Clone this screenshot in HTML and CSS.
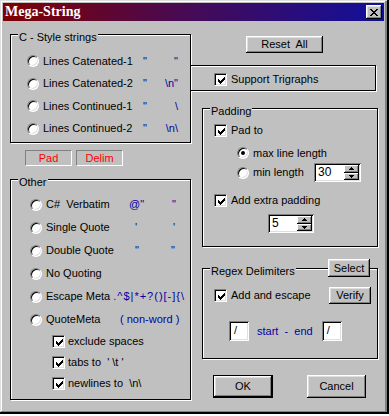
FILE: index.html
```html
<!DOCTYPE html>
<html>
<head>
<meta charset="utf-8">
<title>Mega-String</title>
<link rel="stylesheet" href="styles.css">
</head>
<body>
<div class="window">
  <div class="titlebar">
    <span class="title">Mega-String</span>
    <span class="close"><svg width="8" height="7" viewBox="0 0 8 7"><path d="M0 0h2v1h-2zM6 0h2v1h-2zM1 1h2v1h-2zM5 1h2v1h-2zM2 2h4v1h-4zM3 3h2v1h-2zM2 4h4v1h-4zM1 5h2v1h-2zM5 5h2v1h-2zM0 6h2v1h-2zM6 6h2v1h-2z" fill="#000"/></svg></span>
  </div>
  <div class="client">
    <div class="left">
      <div class="group cstyle">
        <span class="legend">C - Style strings</span>
        <div class="opt"><i class="radio"></i><span class="lbl">Lines Catenated-1</span><span class="q"><b>"</b><b>"</b></span></div>
        <div class="opt"><i class="radio"></i><span class="lbl">Lines Catenated-2</span><span class="q"><b>"</b><b>\n"</b></span></div>
        <div class="opt"><i class="radio"></i><span class="lbl">Lines Continued-1</span><span class="q"><b>"</b><b>\</b></span></div>
        <div class="opt"><i class="radio"></i><span class="lbl">Lines Continued-2</span><span class="q"><b>"</b><b>\n\</b></span></div>
      </div>
      <div class="tags"><span class="tag">Pad</span><span class="tag">Delim</span></div>
      <div class="group other">
        <span class="legend">Other</span>
        <div class="opt"><i class="radio"></i><span class="lbl">C#&nbsp; Verbatim</span><span class="q"><b>@"</b><b>"</b></span></div>
        <div class="opt"><i class="radio"></i><span class="lbl">Single Quote</span><span class="q q-in"><b>'</b><b>'</b></span></div>
        <div class="opt"><i class="radio"></i><span class="lbl">Double Quote</span><span class="q q-in"><b>"</b><b>"</b></span></div>
        <div class="opt"><i class="radio"></i><span class="lbl">No Quoting</span></div>
        <div class="opt"><i class="radio"></i><span class="lbl-auto">Escape Meta</span><span class="meta">.^$|*+?()[-]{\</span></div>
        <div class="opt"><i class="radio"></i><span class="lbl lbl-qm">QuoteMeta</span><span class="blue">( non-word )</span></div>
        <div class="chk-row"><i class="check"><svg width="7" height="7" viewBox="0 0 7 7"><path d="M0 2h1v3h-1zM1 3h1v3h-1zM2 4h1v3h-1zM3 3h1v3h-1zM4 2h1v3h-1zM5 1h1v3h-1zM6 0h1v3h-1z" fill="#000"/></svg></i><span>exclude spaces</span></div>
        <div class="chk-row"><i class="check"><svg width="7" height="7" viewBox="0 0 7 7"><path d="M0 2h1v3h-1zM1 3h1v3h-1zM2 4h1v3h-1zM3 3h1v3h-1zM4 2h1v3h-1zM5 1h1v3h-1zM6 0h1v3h-1z" fill="#000"/></svg></i><span>tabs to&nbsp; ' \t '</span></div>
        <div class="chk-row"><i class="check"><svg width="7" height="7" viewBox="0 0 7 7"><path d="M0 2h1v3h-1zM1 3h1v3h-1zM2 4h1v3h-1zM3 3h1v3h-1zM4 2h1v3h-1zM5 1h1v3h-1zM6 0h1v3h-1z" fill="#000"/></svg></i><span>newlines to&nbsp; \n\</span></div>
      </div>
    </div>

    <div class="right">
      <div class="btn reset">Reset&nbsp; All</div>
      <div class="trig">
        <div class="row-c"><i class="check"><svg width="7" height="7" viewBox="0 0 7 7"><path d="M0 2h1v3h-1zM1 3h1v3h-1zM2 4h1v3h-1zM3 3h1v3h-1zM4 2h1v3h-1zM5 1h1v3h-1zM6 0h1v3h-1z" fill="#000"/></svg></i><span>Support Trigraphs</span></div>
      </div>
      <div class="group padding">
        <span class="legend">Padding</span>
        <div class="row-c r-padto"><i class="check"><svg width="7" height="7" viewBox="0 0 7 7"><path d="M0 2h1v3h-1zM1 3h1v3h-1zM2 4h1v3h-1zM3 3h1v3h-1zM4 2h1v3h-1zM5 1h1v3h-1zM6 0h1v3h-1z" fill="#000"/></svg></i><span>Pad to</span></div>
        <div class="row-r r-max"><i class="radio on"></i><span>max line length</span></div>
        <div class="row-r r-min"><i class="radio"></i><span>min length</span>
          <div class="spin spin30"><span class="spin-text">30</span><span class="spin-btns"><span class="sb"><svg width="5" height="3" viewBox="0 0 5 3"><path d="M2 0h1v1h-1zM1 1h3v1h-3zM0 2h5v1h-5z" fill="#000"/></svg></span><span class="sb"><svg width="5" height="3" viewBox="0 0 5 3"><path d="M0 0h5v1h-5zM1 1h3v1h-3zM2 2h1v1h-1z" fill="#000"/></svg></span></span></div>
        </div>
        <div class="row-c r-extra"><i class="check"><svg width="7" height="7" viewBox="0 0 7 7"><path d="M0 2h1v3h-1zM1 3h1v3h-1zM2 4h1v3h-1zM3 3h1v3h-1zM4 2h1v3h-1zM5 1h1v3h-1zM6 0h1v3h-1z" fill="#000"/></svg></i><span>Add extra padding</span></div>
        <div class="spin spin5"><span class="spin-text">5</span><span class="spin-btns"><span class="sb"><svg width="5" height="3" viewBox="0 0 5 3"><path d="M2 0h1v1h-1zM1 1h3v1h-3zM0 2h5v1h-5z" fill="#000"/></svg></span><span class="sb"><svg width="5" height="3" viewBox="0 0 5 3"><path d="M0 0h5v1h-5zM1 1h3v1h-3zM2 2h1v1h-1z" fill="#000"/></svg></span></span></div>
      </div>
      <div class="group regex">
        <span class="legend">Regex Delimiters</span>
        <div class="btn select">Select</div>
        <div class="row-c r-add"><i class="check"><svg width="7" height="7" viewBox="0 0 7 7"><path d="M0 2h1v3h-1zM1 3h1v3h-1zM2 4h1v3h-1zM3 3h1v3h-1zM4 2h1v3h-1zM5 1h1v3h-1zM6 0h1v3h-1z" fill="#000"/></svg></i><span>Add and escape</span><div class="btn verify">Verify</div></div>
        <div class="delims"><span class="field">/</span><span class="blue se">start&nbsp; -&nbsp; end</span><span class="field">/</span></div>
      </div>
      <div class="actions"><div class="btn ok"><span>OK</span></div><div class="btn cancel">Cancel</div></div>
    </div>
  </div>
</div>
</body>
</html>
```

FILE: styles.css
```css
* { box-sizing: border-box; }
html, body { margin: 0; padding: 0; background: #fff; }
body { font-family: "Liberation Sans", Arial, sans-serif; font-size: 11px; line-height: 13px; color: #000; }
i, b { font-style: normal; font-weight: normal; }

.window {
  width: 389px; height: 414px; background: #c0c0c0; padding: 3px 5px 3px 3px;
  box-shadow: inset -2px -2px #000, inset 1px 1px #dfdfdf, inset -4px -3px #808080, inset 2px 2px #fff;
}
.titlebar {
  height: 18px; display: flex; align-items: center; justify-content: space-between;
  padding: 0 2px 0 2px;
  background: linear-gradient(to right, #800000, #4a0a50 45%, #10109c);
}
.title { font-family: "Liberation Serif", "Times New Roman", serif; font-weight: bold; font-size: 14px; color: #fff; line-height: 16px; }
.close {
  width: 16px; height: 14px; background: #c0c0c0; display: flex; align-items: center; justify-content: center;
  box-shadow: inset -1px -1px #000, inset 1px 1px #fff, inset -2px -2px #808080, inset 2px 2px #dfdfdf;
}
.close svg { display: block; margin-left: -1px; }

.client { display: grid; grid-template-columns: 7px 180px 1px 1fr; align-items: start; }
.left { grid-column: 2 / 4; grid-row: 1; display: flex; flex-direction: column; }
.right { grid-column: 3 / 5; grid-row: 1; z-index: 1; display: flex; flex-direction: column; align-items: flex-start; }

/* etched group box */
.group, .trig {
  position: relative; border: 1px solid #000;
  box-shadow: inset 1px 1px #fff, 1px 1px #fff;
}
.legend { position: absolute; top: -4px; left: 7px; padding: 0 1px; background: #c0c0c0; white-space: nowrap; }

.cstyle { margin-top: 13px; height: 109px; padding: 15px 0 0 16px; }
.opt { display: flex; align-items: center; height: 22.5px; white-space: nowrap; }
.opt .radio { margin-right: 4px; }
.cstyle .lbl { width: 100px; }
.q { display: flex; justify-content: space-between; color: #0000a0; width: 35px; }

.tags { display: flex; gap: 4px; margin: 7px 0 0 15px; }
.tag { width: 47px; height: 16px; border: 1px solid; border-color: #808080 #fff #fff #808080; color: #f00; display: flex; align-items: center; justify-content: center; }

.other { margin-top: 13px; height: 221px; padding: 13px 0 0 19px; }
.other .opt { height: 23px; }
.other .lbl { width: 83px; }
.other .q { width: 47px; }
.other .q-in { padding-left: 6px; width: 46px; }
.other .lbl-qm { width: 74px; }
.meta { color: #0000a0; margin-left: 3px; letter-spacing: 1px; }
.blue { color: #0000a0; }
.chk-row { display: flex; align-items: center; height: 21px; margin-left: 22px; white-space: nowrap; }
.chk-row .check { margin-right: 3px; }

/* controls */
.radio {
  display: block; flex: none; position: relative; width: 12px; height: 12px; border-radius: 50%; background: #fff;
  border: 1px solid; border-color: #808080 #fff #fff #808080;
  box-shadow: inset 1px 1px #000, inset -1px -1px #dfdfdf;
}
.radio.on::after { content: ""; position: absolute; left: 3px; top: 3px; width: 4px; height: 4px; border-radius: 50%; background: #000; }
.check {
  display: block; flex: none; width: 13px; height: 13px; background: #fff; padding: 2px;
  border: 1px solid; border-color: #808080 #fff #fff #808080;
  box-shadow: inset 1px 1px #000, inset -1px -1px #dfdfdf;
}
.check svg { display: block; margin: 1px 0 0 1px; }
.btn {
  background: #c0c0c0; display: flex; align-items: center; justify-content: center; white-space: nowrap;
  box-shadow: inset -1px -1px #000, inset 1px 1px #fff, inset -2px -2px #808080, inset 2px 2px #dfdfdf;
}

/* right column */
.reset { margin: 15px 0 0 56px; width: 77px; height: 17px; }
.trig { margin-top: 12px; width: 186px; height: 26px; padding: 3px 0 0 23px; display: flex; align-items: center; background: #c0c0c0; }
.row-c { display: flex; align-items: center; white-space: nowrap; }
.row-c .check { margin-right: 4px; }
.row-r { display: flex; align-items: center; white-space: nowrap; padding-left: 23px; }
.row-r .radio { margin-right: 4px; }

.padding { margin: 17px 0 0 12px; width: 176px; height: 139px; padding: 11px 16px 0 11px; }
.r-padto { height: 21px; }
.r-max { height: 20px; margin-top: 2px; }
.r-min { height: 19px; }
.r-extra { height: 21px; margin-top: 8px; }

.spin {
  display: flex; height: 19px; background: #fff; padding: 2px;
  box-shadow: inset 1px 1px #808080, inset -1px -1px #fff, inset 2px 2px #000, inset -2px -2px #dfdfdf;
}
.spin-text { flex: 1; padding-left: 2px; line-height: 15px; font-size: 12px; }
.spin-btns { display: flex; flex-direction: column; width: 15px; }
.sb {
  flex: 1; display: flex; align-items: center; justify-content: center; background: #c0c0c0;
  box-shadow: inset -1px -1px #000, inset 1px 1px #fff, inset -2px -2px #808080;
}
.spin30 { width: 47px; margin-left: auto; }
.spin5 { width: 46px; margin: 3px 0 0 54px; }

.regex { margin: 21px 0 0 12px; width: 176px; height: 91px; padding: 18px 6px 0 11px; }
.select { position: absolute; left: 125px; top: -10px; width: 42px; height: 18px; }
.r-add { height: 17px; }
.verify { margin-left: auto; width: 42px; height: 17px; }
.delims { display: flex; align-items: center; margin: 17px 0 0 15px; }
.field {
  width: 20px; height: 20px; background: #fff; padding: 3px 0 0 5px;
  box-shadow: inset 1px 1px #808080, inset -1px -1px #fff, inset 2px 2px #000, inset -2px -2px #dfdfdf;
}
.se { margin: 0 9px 0 8px; white-space: nowrap; }

.actions { display: flex; gap: 34px; margin: 16px 0 0 23px; }
.ok { width: 60px; height: 23px; border: 1px solid #000; }
.cancel { width: 59px; height: 23px; }
```
